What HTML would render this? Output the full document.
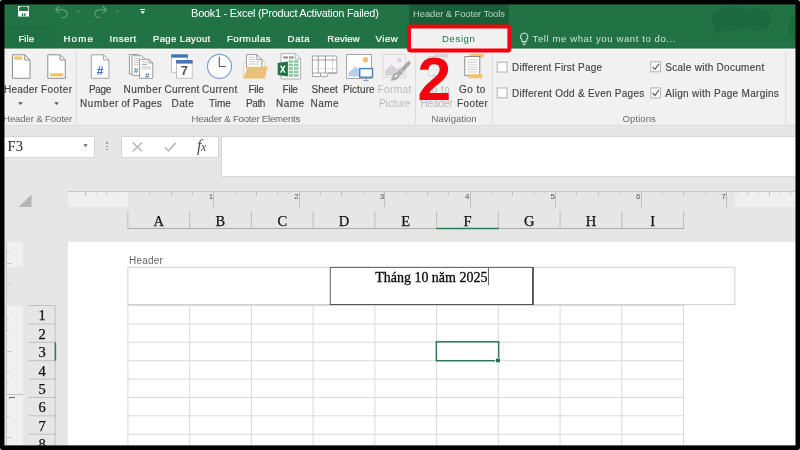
<!DOCTYPE html>
<html>
<head>
<meta charset="utf-8">
<title>Excel - Header &amp; Footer Tools - Design</title>
<style>
html,body{margin:0;padding:0;}
body{width:800px;height:450px;overflow:hidden;background:#e6e6e6;font-family:"Liberation Sans",sans-serif;position:relative;}
#app{position:absolute;left:0;top:0;width:800px;height:450px;overflow:hidden;background:#e6e6e6;}
#app div,#app span,#app svg{position:absolute;}
.t{white-space:nowrap;}
.cb{width:8.8px;height:8.8px;border:1px solid #ababab;background:#fff;}
.sep{width:1px;background:#dddddd;top:52px;height:72px;}
.ch{top:211px;height:17px;border-left:1px solid #c2c2c2;}
.chl{font-family:"Liberation Serif",serif;font-size:14.5px;line-height:18px;color:#111;-webkit-text-stroke:0.25px #111;top:211.5px;width:61.7px;text-align:center;}
.rhl{font-family:"Liberation Serif",serif;font-size:14.5px;line-height:18px;color:#111;-webkit-text-stroke:0.25px #111;left:28.6px;width:27px;text-align:center;}
.rs{left:28.4px;width:27px;height:1px;background:#c0c0c0;}
.vg{top:305px;width:1px;height:141px;background:#e0e0e0;}
.hg{left:128px;width:556px;height:1px;background:#e0e0e0;}
.bk{background:#000;}

</style>
</head>
<body>
<div id="app">
<div id="layer" style="left:0;top:0;width:800px;height:450px;will-change:transform;">

<!-- ===== title bar + tab strip ===== -->
<div style="left:0;top:0;width:800px;height:48px;background:#217346;"></div>
<div style="left:409px;top:4px;width:100px;height:22px;background:#1a5e39;"></div>

<!-- faint office background art in title bar -->
<svg style="left:700px;top:4px;" width="100" height="44" viewBox="700 4 100 44">
  <g fill="#1e6a40">
    <ellipse cx="732" cy="18.5" rx="20" ry="12.5"/>
    <ellipse cx="757" cy="19.5" rx="14.5" ry="11.5"/>
    <path d="M716 24 L712.5 34 L728 29 Z"/>
    <ellipse cx="798" cy="27" rx="10" ry="13"/>
  </g>
</svg>

<!-- quick access toolbar -->
<svg style="left:18px;top:6.4px;" width="11.4" height="10.6" viewBox="0 0 13 12">
  <path d="M0.6 0.6 H12.4 V11.4 H0.6 Z" fill="none" stroke="#fff" stroke-width="1.3"/>
  <rect x="2.6" y="0.5" width="7.8" height="4.6" fill="#217346" stroke="none"/>
  <rect x="0.5" y="5.6" width="12" height="5.9" fill="#fff"/>
  <rect x="4.4" y="8.4" width="1.6" height="3.1" fill="#217346"/>
  <rect x="7" y="8.4" width="1.6" height="3.1" fill="#217346"/>
</svg>
<svg style="left:54.4px;top:4.8px;" width="16" height="14" viewBox="0 0 16 14">
  <path d="M5.2 1.2 L1.6 4.8 L5.2 8.4 M1.8 4.8 H9.2 A3.9 3.9 0 0 1 9.2 12.6 H7.6" fill="none" stroke="#5e9a79" stroke-width="1.3"/>
</svg>
<svg style="left:76px;top:10px;" width="5" height="3.4" viewBox="0 0 6 4"><path d="M0.5 0.5 H5.5 L3 3.2 Z" fill="#4f8f6c"/></svg>
<svg style="left:92px;top:4.8px;" width="16" height="14" viewBox="0 0 16 14">
  <path d="M10.8 1.2 L14.4 4.8 L10.8 8.4 M14.2 4.8 H6.8 A3.9 3.9 0 0 0 6.8 12.6 H8.4" fill="none" stroke="#5e9a79" stroke-width="1.3"/>
</svg>
<svg style="left:115.4px;top:10px;" width="5" height="3.4" viewBox="0 0 6 4"><path d="M0.5 0.5 H5.5 L3 3.2 Z" fill="#4f8f6c"/></svg>
<div style="left:140.4px;top:8.8px;width:4.6px;height:1px;background:#fff;"></div>
<svg style="left:140px;top:10.8px;" width="5.4" height="3.4" viewBox="0 0 6 4"><path d="M0.4 0.4 H5.6 L3 3.4 Z" fill="#fff"/></svg>

<!-- tell me bulb -->
<svg style="left:518.9px;top:31.6px;" width="10.4" height="14.3" viewBox="0 0 10 14">
  <path d="M5 1 A3.6 3.6 0 0 1 7.2 7.4 V9.3 H2.8 V7.4 A3.6 3.6 0 0 1 5 1 Z" fill="none" stroke="#cfe3d7" stroke-width="1"/>
  <path d="M3.2 10.8 H6.8 M3.8 12.4 H6.2" stroke="#cfe3d7" stroke-width="1"/>
</svg>

<!-- ===== ribbon ===== -->
<div style="left:0;top:48px;width:800px;height:78px;background:#f1f1f1;"></div>
<div style="left:0;top:47px;width:800px;height:1px;background:#1f6e42;"></div>
<div style="left:0;top:48px;width:800px;height:1px;background:#7faa92;"></div>
<div style="left:0;top:49px;width:800px;height:1px;background:#f7f9f8;"></div>
<div style="left:4px;top:26px;width:48px;height:21px;background:#1f7043;"></div>
<div style="left:0;top:125px;width:800px;height:1px;background:#dcdcdc;"></div>
<div class="sep" style="left:76px;"></div>
<div class="sep" style="left:415px;"></div>
<div class="sep" style="left:492px;"></div>
<div class="sep" style="left:785px;"></div>

<!-- ribbon icons: one svg in image pixel coordinates -->
<svg style="left:0;top:48px;" width="800" height="40" viewBox="0 48 800 40">
  <!-- Header -->
  <path d="M12.5 54.8 H24.8 L30 60 V78.3 H12.5 Z" fill="#fff" stroke="#8e8e8e" stroke-width="1"/>
  <path d="M24.8 54.8 V60 H30" fill="none" stroke="#8e8e8e" stroke-width="1"/>
  <rect x="14.3" y="56.4" width="8.1" height="3.3" fill="#efc570"/>
  <!-- Footer -->
  <path d="M47.8 54.8 H60.1 L65.3 60 V78.3 H47.8 Z" fill="#fff" stroke="#8e8e8e" stroke-width="1"/>
  <path d="M60.1 54.8 V60 H65.3" fill="none" stroke="#8e8e8e" stroke-width="1"/>
  <rect x="50.1" y="73.2" width="13.3" height="3.2" fill="#efc570"/>
  <!-- Page Number -->
  <path d="M91.3 54.8 H103.6 L108.9 60 V78.3 H91.3 Z" fill="#fff" stroke="#a2a2a2" stroke-width="1"/>
  <path d="M103.6 54.8 V60 H108.9" fill="none" stroke="#a2a2a2" stroke-width="1"/>
  <text x="100.1" y="75" font-family="'Liberation Sans',sans-serif" font-size="12" font-weight="bold" fill="#3f78ba" text-anchor="middle">#</text>
  <!-- Number of Pages -->
  <path d="M129.4 54.5 H138.5 L141.4 57.4 V74 H129.4 Z" fill="#fff" stroke="#8e8e8e" stroke-width="0.9"/>
  <path d="M132 55.8 H141.6 L145 59.2 V75.4 H132 Z" fill="#fff" stroke="#8e8e8e" stroke-width="0.9"/>
  <path d="M134 58.5 H140.5 M134 60.6 H141.5 M134 62.7 H141.5 M134 64.8 H141.5" stroke="#c4c4c4" stroke-width="0.9"/>
  <text x="136.2" y="73.4" font-family="'Liberation Sans',sans-serif" font-size="7.5" font-weight="bold" fill="#3f78ba" text-anchor="middle">#</text>
  <path d="M139.6 59.2 H149 L152.8 63 V78.3 H139.6 Z" fill="#fff" stroke="#8e8e8e" stroke-width="0.9"/>
  <path d="M149 59.2 V63 H152.8" fill="none" stroke="#8e8e8e" stroke-width="0.9"/>
  <path d="M141.8 61.9 H147.5" stroke="#bdbdbd" stroke-width="0.9"/>
  <path d="M141.8 64.3 H147" stroke="#8a8a8a" stroke-width="0.9"/>
  <rect x="141.8" y="66" width="9.2" height="3.6" fill="#dedede"/>
  <text x="147.3" y="77.6" font-family="'Liberation Sans',sans-serif" font-size="8" font-weight="bold" fill="#3f78ba" text-anchor="middle">#</text>
  <!-- Current Date -->
  <rect x="171.6" y="54.8" width="16" height="17.4" fill="#fff" stroke="#b5b5b5" stroke-width="0.8"/>
  <rect x="171.2" y="54.4" width="16.8" height="3.3" fill="#3f78b8"/>
  <rect x="176.6" y="60.4" width="15.6" height="17.8" fill="#fff" stroke="#b5b5b5" stroke-width="0.8"/>
  <rect x="176.2" y="60" width="16.4" height="3.6" fill="#3f78b8"/>
  <text x="184.4" y="75.4" font-family="'Liberation Sans',sans-serif" font-size="13" font-weight="bold" fill="#555" text-anchor="middle">7</text>
  <!-- Current Time -->
  <circle cx="219.5" cy="66.4" r="12" fill="#fff" stroke="#7d9fc9" stroke-width="1.2"/>
  <path d="M219.3 56.8 V66.5 H225.8" fill="none" stroke="#5a5a5a" stroke-width="1.1"/>
  <!-- File Path -->
  <path d="M243.4 63.5 H247 V60 H263.2 V61.5 H264.8 V78 H243.4 Z" fill="#fdf6e6" stroke="#f0d59f" stroke-width="0.9"/>
  <path d="M246.5 54.6 H256.8 L261.8 59.6 V68 H246.5 Z" fill="#fff" stroke="#8e8e8e" stroke-width="0.9"/>
  <path d="M256.8 54.6 V59.6 H261.8" fill="none" stroke="#8e8e8e" stroke-width="0.9"/>
  <path d="M248.8 57.2 H255 M248.8 59.5 H255 M248.8 61.8 H259.4 M248.8 64.1 H259.4" stroke="#c6c6c6" stroke-width="0.9"/>
  <path d="M248 66.8 H268 L264.3 78.5 H243.3 Z" fill="#e9c17b"/>
  <!-- File Name -->
  <path d="M281 53.6 H295.2 L300.6 59 V79 H281 Z" fill="#fff" stroke="#a8a8a8" stroke-width="0.9"/>
  <path d="M295.2 53.6 V59 H300.6" fill="none" stroke="#a8a8a8" stroke-width="0.9"/>
  <rect x="283.3" y="56.3" width="4.6" height="2.4" fill="#9b9b9b"/>
  <rect x="289" y="56.3" width="4.6" height="2.4" fill="#9b9b9b"/>
  <g fill="#8fc8a4">
    <rect x="288.6" y="60.2" width="4.6" height="2.6"/><rect x="294" y="60.2" width="4.6" height="2.6"/>
    <rect x="288.6" y="63.7" width="4.6" height="2.6"/><rect x="294" y="63.7" width="4.6" height="2.6"/>
    <rect x="288.6" y="67.2" width="4.6" height="2.6"/><rect x="294" y="67.2" width="4.6" height="2.6"/>
    <rect x="288.6" y="70.7" width="4.6" height="2.6"/><rect x="294" y="70.7" width="4.6" height="2.6"/>
    <rect x="288.6" y="74.2" width="4.6" height="2.6"/><rect x="294" y="74.2" width="4.6" height="2.6"/>
  </g>
  <path d="M277.7 62.9 L287.9 61.5 V76.5 L277.7 75.1 Z" fill="#1e7145"/>
  <path d="M280.6 65.6 L285 72.6 M285 65.6 L280.6 72.6" stroke="#fff" stroke-width="1.5" fill="none"/>
  <!-- Sheet Name -->
  <path d="M312.4 56 H336.8 V73 H328.4 L327.2 76.6 H320.8 L320.4 75.6 L319.6 76.6 H312.4 Z" fill="#fff" stroke="#9a9a9a" stroke-width="0.9"/>
  <path d="M318.3 56 V73 M325.4 56 V73" stroke="#8e8e8e" stroke-width="0.9"/>
  <path d="M332.5 56 V73" stroke="#d2d2d2" stroke-width="0.9"/>
  <path d="M312.4 60 H336.8" stroke="#9a9a9a" stroke-width="0.9"/>
  <path d="M312.4 68.7 H336.8" stroke="#d6d6d6" stroke-width="0.9"/>
  <path d="M312.4 73 H336.8" stroke="#9a9a9a" stroke-width="0.9"/>
  <path d="M320.5 73 V76" stroke="#9a9a9a" stroke-width="0.9"/>
  <!-- Picture -->
  <rect x="346.6" y="54.5" width="24.8" height="24" fill="#fff" stroke="#9c9c9c" stroke-width="0.9"/>
  <circle cx="365.5" cy="59.8" r="2.7" fill="#eac077"/>
  <path d="M348.6 76.6 V72.6 L355.4 66.4 L360 70.2 V76.6 Z" fill="#b9cfe8"/>
  <rect x="359.7" y="68.6" width="12.8" height="8.6" fill="#fff" stroke="#4a7fbd" stroke-width="1.4"/>
  <path d="M366.1 78 V80.3 M363.6 80.6 H368.6" stroke="#6f9bcf" stroke-width="1"/>
  <!-- Format Picture (disabled) -->
  <rect x="383.1" y="54.5" width="22.4" height="23" fill="#f4f0f6" stroke="#d9d9d9" stroke-width="0.9"/>
  <circle cx="399.4" cy="60.4" r="2.4" fill="#dad6dc"/>
  <path d="M385 75.8 V70.5 L391.6 64.4 L397.6 69.4 L400 67.6 L403.6 71 V75.8 Z" fill="#d6d2d8"/>
  <path d="M408.8 60.6 L411 63.2 L400.4 75 L397.2 72.4 Z" fill="#a9a9a9"/>
  <path d="M398.4 73 C395.4 72.2 392.6 74.2 392.4 77 C392.2 78.8 391.2 79.6 389.8 80.2 C393.4 81.2 398.2 80.2 399.4 76.6 C399.8 75.2 399.4 73.8 398.4 73 Z" fill="#a9a9a9"/>
  <path d="M400.6 70 L402.8 72.2" stroke="#f1f1f1" stroke-width="1"/>
  <ellipse cx="396.2" cy="76" rx="2" ry="1.3" fill="#e4e4e4" transform="rotate(-40 396.2 76)"/>
  <!-- Go to Header (disabled) -->
  <rect x="434.2" y="54" width="13.8" height="3.7" fill="#d9d9d9"/>
  <rect x="428.8" y="56.6" width="15" height="19" fill="#fafafa" stroke="#cfcfcf" stroke-width="0.9"/>
  <path d="M431.2 60 H441.4 M431.2 62.4 H441.4 M431.2 64.8 H441.4 M431.2 67.2 H441.4 M431.2 69.6 H441.4 M431.2 72 H441.4" stroke="#dedede" stroke-width="0.9"/>
  <rect x="432.6" y="74.2" width="14" height="3.8" fill="#dcdcdc"/>
  <!-- Go to Footer -->
  <rect x="469.7" y="54" width="14" height="3.7" fill="#efc570"/>
  <rect x="464.8" y="56.6" width="15" height="19" fill="#fff" stroke="#7f7f7f" stroke-width="0.9"/>
  <path d="M467.2 60 H477.4 M467.2 62.4 H477.4 M467.2 64.8 H477.4 M467.2 67.2 H477.4 M467.2 69.6 H477.4 M467.2 72 H477.4" stroke="#c9c9c9" stroke-width="0.9"/>
  <rect x="468" y="74.2" width="14.5" height="4" fill="#efc570"/>
</svg>


<!-- small dropdown arrows under Header / Footer -->
<svg style="left:18px;top:101.6px;" width="5" height="3" viewBox="0 0 5 3"><path d="M0.2 0.2 H4.8 L2.5 2.9 Z" fill="#555"/></svg>
<svg style="left:53.6px;top:101.6px;" width="5" height="3" viewBox="0 0 5 3"><path d="M0.2 0.2 H4.8 L2.5 2.9 Z" fill="#555"/></svg>

<!-- checkboxes -->
<svg style="left:490px;top:56px;" width="180" height="48" viewBox="490 56 180 48">
  <g fill="#fff" stroke="#b2b2b2" stroke-width="1">
    <rect x="497.2" y="62.2" width="9.8" height="9.8"/>
    <rect x="497.2" y="88" width="9.8" height="9.8"/>
    <rect x="650.8" y="61.8" width="9.7" height="10"/>
    <rect x="650.8" y="87.9" width="9.7" height="10"/>
  </g>
  <g fill="none" stroke="#5c5c5c" stroke-width="1.15">
    <path d="M652.6 66.9 L654.9 69.4 L659 63.8"/>
    <path d="M652.6 93 L654.9 95.5 L659 89.9"/>
  </g>
</svg>

<!-- ===== Design tab (highlighted with red frame) + big red 2 ===== -->
<svg style="left:400px;top:20px;" width="120" height="36" viewBox="400 20 120 36">
  <rect x="409" y="26.4" width="100.4" height="24.1" rx="1.8" ry="1.8" fill="#f1f1f1" stroke="#f6000f" stroke-width="4"/>
</svg>

<!-- ===== formula bar ===== -->
<div style="left:0;top:136px;width:93px;height:20.3px;background:#fff;border:0 solid #d6d6d6;border-width:0.5px;"></div>
<span class="t" style="left:7.6px;top:138.2px;font-family:'Liberation Serif',serif;font-size:14.5px;line-height:16px;color:#222;">F3</span>
<svg style="left:83px;top:144.2px;" width="5" height="3" viewBox="0 0 5 3"><path d="M0.2 0.2 H4.8 L2.5 2.9 Z" fill="#666"/></svg>
<div style="left:106.4px;top:142.4px;width:1.4px;height:1.4px;background:#9a9a9a;"></div>
<div style="left:106.4px;top:145.7px;width:1.4px;height:1.4px;background:#9a9a9a;"></div>
<div style="left:106.4px;top:149.0px;width:1.4px;height:1.4px;background:#9a9a9a;"></div>
<div style="left:121px;top:136px;width:96px;height:20.3px;background:#fff;border:0 solid #d6d6d6;border-width:0.5px;"></div>
<svg style="left:132px;top:141.6px;" width="11" height="10" viewBox="0 0 11 10"><path d="M0.7 0.6 L10.1 9.4 M10.1 0.6 L0.7 9.4" stroke="#bcbcbc" stroke-width="1.5" fill="none"/></svg>
<svg style="left:163.5px;top:141.6px;" width="13" height="10" viewBox="0 0 13 10"><path d="M0.8 5.4 L4.4 8.8 L11.8 0.8" stroke="#bcbcbc" stroke-width="1.7" fill="none"/></svg>
<span class="t" style="left:197px;top:137.2px;font-family:'Liberation Serif',serif;font-style:italic;font-size:16px;line-height:18px;color:#4a4a4a;letter-spacing:-0.4px;">f<span style="position:static;font-size:12px;">x</span></span>
<div style="left:220.5px;top:136px;width:579px;height:38.6px;background:#fff;border:0 solid #d6d6d6;border-width:0.5px;"></div>

<!-- ===== horizontal ruler ===== -->
<div style="left:68px;top:192px;width:60px;height:14.5px;background:#f0f0f0;"></div>
<div style="left:735px;top:192px;width:65px;height:14.5px;background:#f0f0f0;"></div>
<div style="left:68px;top:191px;width:732px;height:1px;background:#c8c8c8;"></div>
<div style="left:74.4px;top:192px;width:1px;height:2px;background:#d6d6d6;"></div>
<div style="left:85.1px;top:192px;width:1px;height:4px;background:#c2c2c2;"></div>
<div style="left:95.8px;top:192px;width:1px;height:2px;background:#d6d6d6;"></div>
<div style="left:106.4px;top:192px;width:1px;height:3px;background:#cacaca;"></div>
<div style="left:117.1px;top:192px;width:1px;height:2px;background:#d6d6d6;"></div>
<div style="left:127.8px;top:192px;width:1px;height:0px;background:#e6e6e6;"></div>
<div style="left:138.5px;top:192px;width:1px;height:2px;background:#d6d6d6;"></div>
<div style="left:149.2px;top:192px;width:1px;height:3px;background:#cacaca;"></div>
<div style="left:159.8px;top:192px;width:1px;height:2px;background:#d6d6d6;"></div>
<div style="left:170.5px;top:192px;width:1px;height:4px;background:#c2c2c2;"></div>
<div style="left:181.2px;top:192px;width:1px;height:2px;background:#d6d6d6;"></div>
<div style="left:191.9px;top:192px;width:1px;height:3px;background:#cacaca;"></div>
<div style="left:202.6px;top:192px;width:1px;height:2px;background:#d6d6d6;"></div>
<div style="left:213.2px;top:192px;width:1px;height:14.5px;background:#bdbdbd;"></div>
<div style="left:223.9px;top:192px;width:1px;height:2px;background:#d6d6d6;"></div>
<div style="left:234.6px;top:192px;width:1px;height:3px;background:#cacaca;"></div>
<div style="left:245.3px;top:192px;width:1px;height:2px;background:#d6d6d6;"></div>
<div style="left:256.0px;top:192px;width:1px;height:4px;background:#c2c2c2;"></div>
<div style="left:266.7px;top:192px;width:1px;height:2px;background:#d6d6d6;"></div>
<div style="left:277.3px;top:192px;width:1px;height:3px;background:#cacaca;"></div>
<div style="left:288.0px;top:192px;width:1px;height:2px;background:#d6d6d6;"></div>
<div style="left:298.7px;top:192px;width:1px;height:14.5px;background:#bdbdbd;"></div>
<div style="left:309.4px;top:192px;width:1px;height:2px;background:#d6d6d6;"></div>
<div style="left:320.1px;top:192px;width:1px;height:3px;background:#cacaca;"></div>
<div style="left:330.7px;top:192px;width:1px;height:2px;background:#d6d6d6;"></div>
<div style="left:341.4px;top:192px;width:1px;height:4px;background:#c2c2c2;"></div>
<div style="left:352.1px;top:192px;width:1px;height:2px;background:#d6d6d6;"></div>
<div style="left:362.8px;top:192px;width:1px;height:3px;background:#cacaca;"></div>
<div style="left:373.5px;top:192px;width:1px;height:2px;background:#d6d6d6;"></div>
<div style="left:384.2px;top:192px;width:1px;height:14.5px;background:#bdbdbd;"></div>
<div style="left:394.8px;top:192px;width:1px;height:2px;background:#d6d6d6;"></div>
<div style="left:405.5px;top:192px;width:1px;height:3px;background:#cacaca;"></div>
<div style="left:416.2px;top:192px;width:1px;height:2px;background:#d6d6d6;"></div>
<div style="left:426.9px;top:192px;width:1px;height:4px;background:#c2c2c2;"></div>
<div style="left:437.6px;top:192px;width:1px;height:2px;background:#d6d6d6;"></div>
<div style="left:448.2px;top:192px;width:1px;height:3px;background:#cacaca;"></div>
<div style="left:458.9px;top:192px;width:1px;height:2px;background:#d6d6d6;"></div>
<div style="left:469.6px;top:192px;width:1px;height:14.5px;background:#bdbdbd;"></div>
<div style="left:480.3px;top:192px;width:1px;height:2px;background:#d6d6d6;"></div>
<div style="left:491.0px;top:192px;width:1px;height:3px;background:#cacaca;"></div>
<div style="left:501.6px;top:192px;width:1px;height:2px;background:#d6d6d6;"></div>
<div style="left:512.3px;top:192px;width:1px;height:4px;background:#c2c2c2;"></div>
<div style="left:523.0px;top:192px;width:1px;height:2px;background:#d6d6d6;"></div>
<div style="left:533.7px;top:192px;width:1px;height:3px;background:#cacaca;"></div>
<div style="left:544.4px;top:192px;width:1px;height:2px;background:#d6d6d6;"></div>
<div style="left:555.0px;top:192px;width:1px;height:14.5px;background:#bdbdbd;"></div>
<div style="left:565.7px;top:192px;width:1px;height:2px;background:#d6d6d6;"></div>
<div style="left:576.4px;top:192px;width:1px;height:3px;background:#cacaca;"></div>
<div style="left:587.1px;top:192px;width:1px;height:2px;background:#d6d6d6;"></div>
<div style="left:597.8px;top:192px;width:1px;height:4px;background:#c2c2c2;"></div>
<div style="left:608.5px;top:192px;width:1px;height:2px;background:#d6d6d6;"></div>
<div style="left:619.1px;top:192px;width:1px;height:3px;background:#cacaca;"></div>
<div style="left:629.8px;top:192px;width:1px;height:2px;background:#d6d6d6;"></div>
<div style="left:640.5px;top:192px;width:1px;height:14.5px;background:#bdbdbd;"></div>
<div style="left:651.2px;top:192px;width:1px;height:2px;background:#d6d6d6;"></div>
<div style="left:661.9px;top:192px;width:1px;height:3px;background:#cacaca;"></div>
<div style="left:672.5px;top:192px;width:1px;height:2px;background:#d6d6d6;"></div>
<div style="left:683.2px;top:192px;width:1px;height:4px;background:#c2c2c2;"></div>
<div style="left:693.9px;top:192px;width:1px;height:2px;background:#d6d6d6;"></div>
<div style="left:704.6px;top:192px;width:1px;height:3px;background:#cacaca;"></div>
<div style="left:715.3px;top:192px;width:1px;height:2px;background:#d6d6d6;"></div>
<div style="left:726.0px;top:192px;width:1px;height:14.5px;background:#bdbdbd;"></div>
<div style="left:736.6px;top:192px;width:1px;height:2px;background:#d6d6d6;"></div>
<div style="left:747.3px;top:192px;width:1px;height:3px;background:#cacaca;"></div>
<div style="left:758.0px;top:192px;width:1px;height:2px;background:#d6d6d6;"></div>
<div style="left:768.7px;top:192px;width:1px;height:4px;background:#c2c2c2;"></div>
<div style="left:779.4px;top:192px;width:1px;height:2px;background:#d6d6d6;"></div>
<div style="left:790.0px;top:192px;width:1px;height:3px;background:#cacaca;"></div>
<span class="t" style="left:208.8px;top:193.2px;font-size:8px;line-height:8px;color:#555;">1</span>
<span class="t" style="left:294.2px;top:193.2px;font-size:8px;line-height:8px;color:#555;">2</span>
<span class="t" style="left:379.7px;top:193.2px;font-size:8px;line-height:8px;color:#555;">3</span>
<span class="t" style="left:465.1px;top:193.2px;font-size:8px;line-height:8px;color:#555;">4</span>
<span class="t" style="left:550.5px;top:193.2px;font-size:8px;line-height:8px;color:#555;">5</span>
<span class="t" style="left:636.0px;top:193.2px;font-size:8px;line-height:8px;color:#555;">6</span>
<span class="t" style="left:721.5px;top:193.2px;font-size:8px;line-height:8px;color:#555;">7</span>

<!-- select-all corner -->
<svg style="left:17px;top:192.5px;" width="16" height="15" viewBox="0 0 16 15"><path d="M14.5 1.4 V14 H1.6 Z" fill="#b6b6b6"/></svg>

<!-- ===== column headers ===== -->
<svg style="left:120px;top:205px;" width="580" height="30" viewBox="120 205 580 30">
  <g stroke="#bdbdbd" stroke-width="1">
    <line x1="127.90" y1="211" x2="127.90" y2="228.6"/>
    <line x1="189.64" y1="211" x2="189.64" y2="228.6"/>
    <line x1="251.38" y1="211" x2="251.38" y2="228.6"/>
    <line x1="313.12" y1="211" x2="313.12" y2="228.6"/>
    <line x1="374.86" y1="211" x2="374.86" y2="228.6"/>
    <line x1="436.60" y1="211" x2="436.60" y2="228.6"/>
    <line x1="498.34" y1="211" x2="498.34" y2="228.6"/>
    <line x1="560.08" y1="211" x2="560.08" y2="228.6"/>
    <line x1="621.82" y1="211" x2="621.82" y2="228.6"/>
    <line x1="683.56" y1="211" x2="683.56" y2="228.6"/>
  </g>
  <line x1="127.4" y1="228.5" x2="684.1" y2="228.5" stroke="#adadad" stroke-width="1.1"/>
  <line x1="436.30" y1="228.5" x2="498.64" y2="228.5" stroke="#2c7b52" stroke-width="1.3"/>
</svg>
<span class="chl" style="left:127.9px;">A</span><span class="chl" style="left:189.6px;">B</span><span class="chl" style="left:251.4px;">C</span><span class="chl" style="left:313.1px;">D</span><span class="chl" style="left:374.9px;">E</span><span class="chl" style="left:436.6px;">F</span><span class="chl" style="left:498.3px;">G</span><span class="chl" style="left:560.1px;">H</span><span class="chl" style="left:621.8px;">I</span>

<!-- ===== page ===== -->
<div style="left:68px;top:241.5px;width:732px;height:209px;background:#fff;"></div>

<!-- vertical ruler -->
<div style="left:6.5px;top:242px;width:16.3px;height:24.6px;background:#f0f0f0;"></div>
<div style="left:6.5px;top:305.8px;width:16.3px;height:145px;background:#f0f0f0;"></div>
<div style="left:6px;top:242px;width:1px;height:208px;background:#cfcfcf;"></div>
<div style="left:6.5px;top:251.9px;width:2px;height:1px;background:#c6c6c6;"></div>
<div style="left:6.5px;top:262.7px;width:4.5px;height:1px;background:#c6c6c6;"></div>
<div style="left:6.5px;top:273.2px;width:2px;height:1px;background:#c6c6c6;"></div>
<div style="left:6.5px;top:283.7px;width:3px;height:1px;background:#c6c6c6;"></div>
<div style="left:6.5px;top:294.5px;width:2px;height:1px;background:#c6c6c6;"></div>
<div style="left:6.5px;top:318.9px;width:2px;height:1px;background:#d2d2d2;"></div>
<div style="left:6.5px;top:329.5px;width:2.6px;height:1px;background:#c6c6c6;"></div>
<div style="left:6.5px;top:340.2px;width:2px;height:1px;background:#d2d2d2;"></div>
<div style="left:6.5px;top:350.9px;width:4.5px;height:1px;background:#c6c6c6;"></div>
<div style="left:6.5px;top:361.5px;width:2px;height:1px;background:#d2d2d2;"></div>
<div style="left:6.5px;top:372.2px;width:2.6px;height:1px;background:#c6c6c6;"></div>
<div style="left:6.5px;top:382.9px;width:2px;height:1px;background:#d2d2d2;"></div>
<div style="left:6.5px;top:404.9px;width:2px;height:1px;background:#d2d2d2;"></div>
<div style="left:6.5px;top:415.6px;width:2.6px;height:1px;background:#c6c6c6;"></div>
<div style="left:6.5px;top:426.2px;width:2px;height:1px;background:#d2d2d2;"></div>
<div style="left:6.5px;top:436.9px;width:4.5px;height:1px;background:#c6c6c6;"></div>
<div style="left:6.5px;top:393.5px;width:16.3px;height:1px;background:#c4c4c4;"></div>
<div style="left:9px;top:396.6px;width:5.6px;height:1px;background:#6a6a6a;"></div>
<div style="left:9px;top:397.4px;width:1px;height:1.6px;background:#8a8a8a;"></div>

<!-- row headers -->
<svg style="left:24px;top:300px;" width="40" height="150" viewBox="24 300 40 150">
  <g stroke="#bfbfbf" stroke-width="1">
    <line x1="28.6" y1="305.55" x2="55.6" y2="305.55"/>
    <line x1="28.6" y1="323.93" x2="55.6" y2="323.93"/>
    <line x1="28.6" y1="342.31" x2="55.6" y2="342.31"/>
    <line x1="28.6" y1="360.69" x2="55.6" y2="360.69"/>
    <line x1="28.6" y1="379.07" x2="55.6" y2="379.07"/>
    <line x1="28.6" y1="397.45" x2="55.6" y2="397.45"/>
    <line x1="28.6" y1="415.83" x2="55.6" y2="415.83"/>
    <line x1="28.6" y1="434.21" x2="55.6" y2="434.21"/>
    <line x1="28.6" y1="452.59" x2="55.6" y2="452.59"/>
    <line x1="55.1" y1="305.1" x2="55.1" y2="450"/>
  </g>
  <line x1="55.4" y1="342.31" x2="55.4" y2="360.69" stroke="#2c7b52" stroke-width="1.5"/>
</svg>
<span class="rhl" style="top:306.4px;">1</span><span class="rhl" style="top:324.8px;">2</span><span class="rhl" style="top:343.2px;">3</span><span class="rhl" style="top:361.6px;">4</span><span class="rhl" style="top:380.0px;">5</span><span class="rhl" style="top:398.3px;">6</span><span class="rhl" style="top:416.7px;">7</span><span class="rhl" style="top:435.1px;">8</span>

<!-- header area of the page -->
<svg style="left:120px;top:262px;" width="625" height="48" viewBox="120 262 625 48">
  <rect x="127.9" y="267.3" width="606.9" height="37.2" fill="#fff" stroke="#d0d0d0" stroke-width="1"/>
  <rect x="330.3" y="267.4" width="202.5" height="37.1" fill="#fff" stroke="#5c5c5c" stroke-width="1"/>
  <line x1="533" y1="267" x2="533" y2="305.2" stroke="#444" stroke-width="1.5"/>
  <line x1="329.8" y1="304.7" x2="533.7" y2="304.7" stroke="#555" stroke-width="1.3"/>
  <line x1="488.5" y1="267.8" x2="488.5" y2="285.3" stroke="#6a6a6a" stroke-width="1"/>
</svg>

<!-- grid lines -->
<svg style="left:120px;top:300px;" width="580" height="150" viewBox="120 300 580 150">
  <g stroke="#d9d9d9" stroke-width="1">
    <line x1="127.90" y1="305.2" x2="127.90" y2="450"/>
    <line x1="189.64" y1="305.2" x2="189.64" y2="450"/>
    <line x1="251.38" y1="305.2" x2="251.38" y2="450"/>
    <line x1="313.12" y1="305.2" x2="313.12" y2="450"/>
    <line x1="374.86" y1="305.2" x2="374.86" y2="450"/>
    <line x1="436.60" y1="305.2" x2="436.60" y2="450"/>
    <line x1="498.34" y1="305.2" x2="498.34" y2="450"/>
    <line x1="560.08" y1="305.2" x2="560.08" y2="450"/>
    <line x1="621.82" y1="305.2" x2="621.82" y2="450"/>
    <line x1="683.56" y1="305.2" x2="683.56" y2="450"/>
    <line x1="127.4" y1="305.55" x2="684.1" y2="305.55"/>
    <line x1="127.4" y1="323.93" x2="684.1" y2="323.93"/>
    <line x1="127.4" y1="342.31" x2="684.1" y2="342.31"/>
    <line x1="127.4" y1="360.69" x2="684.1" y2="360.69"/>
    <line x1="127.4" y1="379.07" x2="684.1" y2="379.07"/>
    <line x1="127.4" y1="397.45" x2="684.1" y2="397.45"/>
    <line x1="127.4" y1="415.83" x2="684.1" y2="415.83"/>
    <line x1="127.4" y1="434.21" x2="684.1" y2="434.21"/>
    <line x1="127.4" y1="452.59" x2="684.1" y2="452.59"/>
  </g>
</svg>

<!-- selected cell F3 -->
<svg style="left:430px;top:336px;" width="76" height="32" viewBox="430 336 76 32">
  <rect x="436.35" y="341.8" width="62.3" height="18.9" fill="none" stroke="#2f7a52" stroke-width="1.5"/>
  <rect x="495.3" y="357.9" width="5.2" height="4.9" fill="#fff"/>
  <rect x="496" y="358.6" width="4" height="3.7" fill="#256f48"/>
</svg>

<span class="t" style="left:191.1px;top:6.5px;font-family:'Liberation Sans',sans-serif;font-size:11px;line-height:13px;letter-spacing:-0.29px;color:#fff;">Book1 - Excel (Product Activation Failed)</span>
<span class="t" style="left:413.1px;top:8.1px;font-family:'Liberation Sans',sans-serif;font-size:9.4px;line-height:11px;letter-spacing:-0.09px;color:#bcd5c7;">Header &amp; Footer Tools</span>
<span class="t" style="left:18.4px;top:32.7px;font-family:'Liberation Sans',sans-serif;font-size:9.6px;line-height:12px;letter-spacing:0.11px;color:#fff;-webkit-text-stroke:0.2px #fff;">File</span>
<span class="t" style="left:63.4px;top:32.7px;font-family:'Liberation Sans',sans-serif;font-size:9.6px;line-height:12px;letter-spacing:1.30px;color:#fff;-webkit-text-stroke:0.2px #fff;">Home</span>
<span class="t" style="left:109.6px;top:32.7px;font-family:'Liberation Sans',sans-serif;font-size:9.6px;line-height:12px;letter-spacing:0.52px;color:#fff;-webkit-text-stroke:0.2px #fff;">Insert</span>
<span class="t" style="left:152.9px;top:32.7px;font-family:'Liberation Sans',sans-serif;font-size:9.6px;line-height:12px;letter-spacing:0.35px;color:#fff;-webkit-text-stroke:0.2px #fff;">Page Layout</span>
<span class="t" style="left:226.9px;top:32.7px;font-family:'Liberation Sans',sans-serif;font-size:9.6px;line-height:12px;letter-spacing:0.53px;color:#fff;-webkit-text-stroke:0.2px #fff;">Formulas</span>
<span class="t" style="left:287.6px;top:32.7px;font-family:'Liberation Sans',sans-serif;font-size:9.6px;line-height:12px;letter-spacing:0.61px;color:#fff;-webkit-text-stroke:0.2px #fff;">Data</span>
<span class="t" style="left:327.3px;top:32.7px;font-family:'Liberation Sans',sans-serif;font-size:9.6px;line-height:12px;letter-spacing:0.19px;color:#fff;-webkit-text-stroke:0.2px #fff;">Review</span>
<span class="t" style="left:375.6px;top:32.7px;font-family:'Liberation Sans',sans-serif;font-size:9.6px;line-height:12px;letter-spacing:0.49px;color:#fff;-webkit-text-stroke:0.2px #fff;">View</span>
<span class="t" style="left:442.1px;top:32.7px;font-family:'Liberation Sans',sans-serif;font-size:9.6px;line-height:12px;letter-spacing:0.58px;color:#217346;">Design</span>
<span class="t" style="left:532.6px;top:32.7px;font-family:'Liberation Sans',sans-serif;font-size:9.6px;line-height:12px;letter-spacing:0.57px;color:#cfe3d7;">Tell me what you want to do...</span>
<span class="t" style="left:4.1px;top:83.9px;font-family:'Liberation Sans',sans-serif;font-size:10px;line-height:12px;letter-spacing:0.20px;color:#444;-webkit-text-stroke:0.15px #444;">Header</span>
<span class="t" style="left:40.9px;top:83.9px;font-family:'Liberation Sans',sans-serif;font-size:10px;line-height:12px;letter-spacing:0.48px;color:#444;-webkit-text-stroke:0.15px #444;">Footer</span>
<span class="t" style="left:88.9px;top:83.9px;font-family:'Liberation Sans',sans-serif;font-size:10px;line-height:12px;letter-spacing:-0.35px;color:#444;-webkit-text-stroke:0.15px #444;">Page</span>
<span class="t" style="left:80.1px;top:97.9px;font-family:'Liberation Sans',sans-serif;font-size:10px;line-height:12px;letter-spacing:0.54px;color:#444;-webkit-text-stroke:0.15px #444;">Number</span>
<span class="t" style="left:123.4px;top:83.9px;font-family:'Liberation Sans',sans-serif;font-size:10px;line-height:12px;letter-spacing:0.54px;color:#444;-webkit-text-stroke:0.15px #444;">Number</span>
<span class="t" style="left:121.4px;top:97.9px;font-family:'Liberation Sans',sans-serif;font-size:10px;line-height:12px;letter-spacing:0.12px;color:#444;-webkit-text-stroke:0.15px #444;">of Pages</span>
<span class="t" style="left:164.6px;top:83.9px;font-family:'Liberation Sans',sans-serif;font-size:10px;line-height:12px;letter-spacing:0.21px;color:#444;-webkit-text-stroke:0.15px #444;">Current</span>
<span class="t" style="left:171.6px;top:97.9px;font-family:'Liberation Sans',sans-serif;font-size:10px;line-height:12px;letter-spacing:0.33px;color:#444;-webkit-text-stroke:0.15px #444;">Date</span>
<span class="t" style="left:202.1px;top:83.9px;font-family:'Liberation Sans',sans-serif;font-size:10px;line-height:12px;letter-spacing:0.29px;color:#444;-webkit-text-stroke:0.15px #444;">Current</span>
<span class="t" style="left:208.9px;top:97.9px;font-family:'Liberation Sans',sans-serif;font-size:10px;line-height:12px;letter-spacing:0.05px;color:#444;-webkit-text-stroke:0.15px #444;">Time</span>
<span class="t" style="left:248.4px;top:83.9px;font-family:'Liberation Sans',sans-serif;font-size:10px;line-height:12px;letter-spacing:-0.27px;color:#444;-webkit-text-stroke:0.15px #444;">File</span>
<span class="t" style="left:245.9px;top:97.9px;font-family:'Liberation Sans',sans-serif;font-size:10px;line-height:12px;letter-spacing:-0.36px;color:#444;-webkit-text-stroke:0.15px #444;">Path</span>
<span class="t" style="left:282.6px;top:83.9px;font-family:'Liberation Sans',sans-serif;font-size:10px;line-height:12px;letter-spacing:-0.27px;color:#444;-webkit-text-stroke:0.15px #444;">File</span>
<span class="t" style="left:275.9px;top:97.9px;font-family:'Liberation Sans',sans-serif;font-size:10px;line-height:12px;letter-spacing:0.54px;color:#444;-webkit-text-stroke:0.15px #444;">Name</span>
<span class="t" style="left:311.4px;top:83.9px;font-family:'Liberation Sans',sans-serif;font-size:10px;line-height:12px;letter-spacing:0.09px;color:#444;-webkit-text-stroke:0.15px #444;">Sheet</span>
<span class="t" style="left:310.4px;top:97.9px;font-family:'Liberation Sans',sans-serif;font-size:10px;line-height:12px;letter-spacing:0.54px;color:#444;-webkit-text-stroke:0.15px #444;">Name</span>
<span class="t" style="left:342.9px;top:83.9px;font-family:'Liberation Sans',sans-serif;font-size:10px;line-height:12px;letter-spacing:0.11px;color:#444;-webkit-text-stroke:0.15px #444;">Picture</span>
<span class="t" style="left:377.6px;top:83.9px;font-family:'Liberation Sans',sans-serif;font-size:10px;line-height:12px;letter-spacing:0.39px;color:#b9b9b9;">Format</span>
<span class="t" style="left:378.9px;top:97.9px;font-family:'Liberation Sans',sans-serif;font-size:10px;line-height:12px;letter-spacing:0.06px;color:#b9b9b9;">Picture</span>
<span class="t" style="left:423.4px;top:83.9px;font-family:'Liberation Sans',sans-serif;font-size:10px;line-height:12px;letter-spacing:0.51px;color:#b9b9b9;">Go to</span>
<span class="t" style="left:420.4px;top:97.9px;font-family:'Liberation Sans',sans-serif;font-size:10px;line-height:12px;letter-spacing:-0.06px;color:#b9b9b9;">Header</span>
<span class="t" style="left:458.9px;top:83.9px;font-family:'Liberation Sans',sans-serif;font-size:10px;line-height:12px;letter-spacing:0.51px;color:#444;-webkit-text-stroke:0.15px #444;">Go to</span>
<span class="t" style="left:457.1px;top:97.9px;font-family:'Liberation Sans',sans-serif;font-size:10px;line-height:12px;letter-spacing:0.38px;color:#444;-webkit-text-stroke:0.15px #444;">Footer</span>
<span class="t" style="left:3.1px;top:113.1px;font-family:'Liberation Sans',sans-serif;font-size:9.6px;line-height:12px;letter-spacing:-0.13px;color:#6a6a6a;">Header &amp; Footer</span>
<span class="t" style="left:191.6px;top:113.1px;font-family:'Liberation Sans',sans-serif;font-size:9.6px;line-height:12px;letter-spacing:-0.21px;color:#6a6a6a;">Header &amp; Footer Elements</span>
<span class="t" style="left:431.6px;top:113.1px;font-family:'Liberation Sans',sans-serif;font-size:9.6px;line-height:12px;letter-spacing:-0.03px;color:#6a6a6a;">Navigation</span>
<span class="t" style="left:622.6px;top:113.1px;font-family:'Liberation Sans',sans-serif;font-size:9.6px;line-height:12px;letter-spacing:0.04px;color:#6a6a6a;">Options</span>
<span class="t" style="left:512.1px;top:61.5px;font-family:'Liberation Sans',sans-serif;font-size:10px;line-height:12px;letter-spacing:0.21px;color:#444;-webkit-text-stroke:0.15px #444;">Different First Page</span>
<span class="t" style="left:512.1px;top:87.5px;font-family:'Liberation Sans',sans-serif;font-size:10px;line-height:12px;letter-spacing:0.27px;color:#444;-webkit-text-stroke:0.15px #444;">Different Odd &amp; Even Pages</span>
<span class="t" style="left:665.2px;top:61.5px;font-family:'Liberation Sans',sans-serif;font-size:10px;line-height:12px;letter-spacing:0.28px;color:#444;-webkit-text-stroke:0.15px #444;">Scale with Document</span>
<span class="t" style="left:665.2px;top:87.5px;font-family:'Liberation Sans',sans-serif;font-size:10px;line-height:12px;letter-spacing:0.29px;color:#444;-webkit-text-stroke:0.15px #444;">Align with Page Margins</span>
<span class="t" style="left:129.1px;top:254.5px;font-family:'Liberation Sans',sans-serif;font-size:10px;line-height:12px;letter-spacing:0.20px;color:#666;">Header</span>
<span class="t" style="left:375.2px;top:269.1px;font-family:'Liberation Serif',serif;font-size:14px;line-height:17px;letter-spacing:-0.01px;color:#0c0c0c;-webkit-text-stroke:0.3px #0c0c0c;">Tháng 10 năm 2025</span>
<span class="t" style="left:417.4px;top:44.1px;font-size:60.5px;font-weight:bold;line-height:70px;color:#f6000f;">2</span>

<!-- ===== black frame of the screenshot ===== -->
<div class="bk" style="left:0;top:0;width:800px;height:4px;"></div>
<div class="bk" style="left:0;top:446px;width:800px;height:4px;"></div>
<div class="bk" style="left:0;top:0;width:4px;height:450px;"></div>
<div class="bk" style="left:796px;top:0;width:4px;height:450px;"></div>
<svg style="left:0;top:0;" width="800" height="450" viewBox="0 0 800 450">
  <path d="M0 0 H2.2 A2.2 2.2 0 0 0 0 2.2 Z M800 0 V2.2 A2.2 2.2 0 0 0 797.8 0 Z M0 450 V447.8 A2.2 2.2 0 0 0 2.2 450 Z M800 450 H797.8 A2.2 2.2 0 0 0 800 447.8 Z" fill="#fff"/>
</svg>
<div style="left:4px;top:4px;width:792px;height:1px;background:rgba(0,0,0,0.38);"></div>
<div style="left:4px;top:445px;width:792px;height:1px;background:rgba(0,0,0,0.62);"></div>
<div style="left:4px;top:4px;width:1px;height:442px;background:rgba(0,0,0,0.45);"></div>
<div style="left:795px;top:4px;width:1px;height:442px;background:rgba(0,0,0,0.5);"></div>

</div>
</div>
</body>
</html>
